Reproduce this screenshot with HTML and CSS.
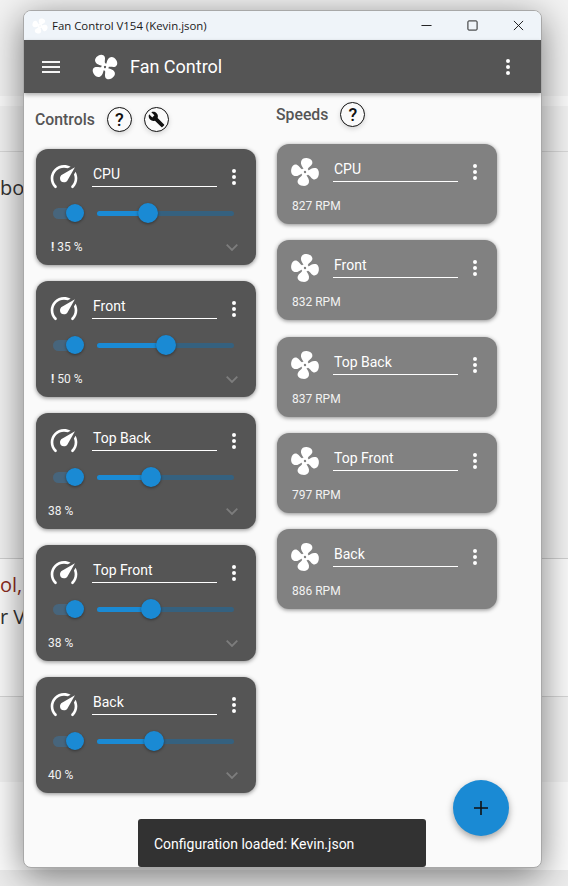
FILE: index.html
```html
<!DOCTYPE html>
<html lang="en">
<head>
  <meta charset="UTF-8">
  <meta name="viewport" content="width=device-width, initial-scale=1.0">
  <title>Fan Control</title>
  <link rel="stylesheet" href="styles.css">
</head>
<body>

<svg class="icon-defs" width="0" height="0">
  <symbol id="i-fan" viewBox="0 0 24 24">
    <path id="fan-blade" d="M10.6 9.8C9.2 8 7.8 6.8 8 4.6C8.2 2.5 10.2 1.4 12.6 1.5C15.2 1.6 16.9 3.2 16.5 5.2C16.1 7 14.2 7.8 13.5 10Z"/>
    <use href="#fan-blade" transform="rotate(90 12 12)"/>
    <use href="#fan-blade" transform="rotate(180 12 12)"/>
    <use href="#fan-blade" transform="rotate(270 12 12)"/>
    <path fill-rule="evenodd" d="M12 9.2a2.8 2.8 0 1 0 0 5.6a2.8 2.8 0 1 0 0-5.6ZM12 11.1a0.9 0.9 0 1 1 0 1.8a0.9 0.9 0 1 1 0-1.8Z"/>
  </symbol>
  <symbol id="i-gauge" viewBox="0 0 24 24"><path d="M12,16A3,3 0 0,1 9,13C9,11.88 9.61,10.9 10.5,10.39L20.21,4.77L14.68,14.35C14.18,15.33 13.17,16 12,16M12,3C13.81,3 15.5,3.5 16.97,4.32L14.87,5.53C14,5.19 13,5 12,5A8,8 0 0,0 4,13C4,15.21 4.89,17.21 6.34,18.65H6.35C6.74,19.04 6.74,19.67 6.35,20.06C5.96,20.45 5.32,20.45 4.93,20.07V20.07C3.12,18.26 2,15.76 2,13A10,10 0 0,1 12,3M22,13C22,15.76 20.88,18.26 19.07,20.07V20.07C18.68,20.45 18.05,20.45 17.66,20.06C17.27,19.67 17.27,19.04 17.66,18.65V18.65C19.11,17.2 20,15.21 20,13C20,12 19.81,11 19.46,10.1L20.67,8C21.5,9.5 22,11.18 22,13Z"/></symbol>
  <symbol id="i-wrench" viewBox="0 0 24 24"><path d="M22.7,19L13.6,9.9C14.5,7.6 14,4.9 12.1,3C10.1,1 7.1,0.6 4.7,1.7L9,6L6,9L1.6,4.7C0.4,7.1 0.9,10.1 2.9,12.1C4.8,14 7.5,14.5 9.8,13.6L18.9,22.7C19.3,23.1 19.9,23.1 20.3,22.7L22.6,20.4C23.1,20 23.1,19.3 22.7,19Z"/></symbol>
  <symbol id="i-dots" viewBox="0 0 24 24"><path d="M12,16A2,2 0 0,1 14,18A2,2 0 0,1 12,20A2,2 0 0,1 10,18A2,2 0 0,1 12,16M12,10A2,2 0 0,1 14,12A2,2 0 0,1 12,14A2,2 0 0,1 10,12A2,2 0 0,1 12,10M12,4A2,2 0 0,1 14,6A2,2 0 0,1 12,8A2,2 0 0,1 10,6A2,2 0 0,1 12,4Z"/></symbol>
</svg>

<!-- Page behind the window -->
<div class="backdrop">
  <div class="band band-a"></div>
  <div class="band band-b"></div>
  <div class="band band-c"></div>
  <div class="band band-d"><span class="back-text">bo</span></div>
  <div class="band band-e"><span class="back-text back-red">ol,</span><span class="back-text">r V</span></div>
  <div class="band band-f"></div>
  <div class="band band-g"></div>
  <div class="band band-h"></div>
</div>

<div class="window">
  <!-- Title bar -->
  <div class="titlebar">
    <svg class="title-icon"><use href="#i-fan"/></svg>
    <span class="title-text">Fan Control V154 (Kevin.json)</span>
    <div class="win-buttons">
      <svg class="win-btn" viewBox="0 0 12 12"><path d="M0.5 6H11.5"/></svg>
      <svg class="win-btn" viewBox="0 0 12 12"><rect x="1" y="1" width="10" height="10" rx="1"/></svg>
      <svg class="win-btn" viewBox="0 0 12 12"><path d="M1 1L11 11M11 1L1 11"/></svg>
    </div>
  </div>

  <!-- App bar -->
  <div class="appbar">
    <div class="burger"><span></span><span></span><span></span></div>
    <svg class="app-logo"><use href="#i-fan"/></svg>
    <span class="app-name">Fan Control</span>
    <svg class="app-menu"><use href="#i-dots"/></svg>
  </div>

  <div class="content">
    <!-- Controls -->
    <div class="column column-controls">
      <div class="section-head">
        <span class="section-title">Controls</span>
        <span class="round-btn">?</span>
        <span class="round-btn"><svg class="wrench"><use href="#i-wrench"/></svg></span>
      </div>

      <div class="card control-card">
        <div class="card-top">
          <svg class="card-icon"><use href="#i-gauge"/></svg>
          <span class="card-name">CPU</span>
          <svg class="card-menu"><use href="#i-dots"/></svg>
        </div>
        <div class="card-sliders">
          <div class="toggle"><span class="toggle-thumb"></span></div>
          <div class="slider"><div class="slider-fill" style="width: 51px"><span class="slider-thumb"></span></div></div>
        </div>
        <div class="card-bottom">
          <span class="card-value"><b>!</b> 35 %</span>
          <svg class="chevron" viewBox="0 0 12 7"><path d="M0.7 0.7L6 6L11.3 0.7"/></svg>
        </div>
      </div>

      <div class="card control-card">
        <div class="card-top">
          <svg class="card-icon"><use href="#i-gauge"/></svg>
          <span class="card-name">Front</span>
          <svg class="card-menu"><use href="#i-dots"/></svg>
        </div>
        <div class="card-sliders">
          <div class="toggle"><span class="toggle-thumb"></span></div>
          <div class="slider"><div class="slider-fill" style="width: 69px"><span class="slider-thumb"></span></div></div>
        </div>
        <div class="card-bottom">
          <span class="card-value"><b>!</b> 50 %</span>
          <svg class="chevron" viewBox="0 0 12 7"><path d="M0.7 0.7L6 6L11.3 0.7"/></svg>
        </div>
      </div>

      <div class="card control-card">
        <div class="card-top">
          <svg class="card-icon"><use href="#i-gauge"/></svg>
          <span class="card-name">Top Back</span>
          <svg class="card-menu"><use href="#i-dots"/></svg>
        </div>
        <div class="card-sliders">
          <div class="toggle"><span class="toggle-thumb"></span></div>
          <div class="slider"><div class="slider-fill" style="width: 54px"><span class="slider-thumb"></span></div></div>
        </div>
        <div class="card-bottom">
          <span class="card-value">38 %</span>
          <svg class="chevron" viewBox="0 0 12 7"><path d="M0.7 0.7L6 6L11.3 0.7"/></svg>
        </div>
      </div>

      <div class="card control-card">
        <div class="card-top">
          <svg class="card-icon"><use href="#i-gauge"/></svg>
          <span class="card-name">Top Front</span>
          <svg class="card-menu"><use href="#i-dots"/></svg>
        </div>
        <div class="card-sliders">
          <div class="toggle"><span class="toggle-thumb"></span></div>
          <div class="slider"><div class="slider-fill" style="width: 54px"><span class="slider-thumb"></span></div></div>
        </div>
        <div class="card-bottom">
          <span class="card-value">38 %</span>
          <svg class="chevron" viewBox="0 0 12 7"><path d="M0.7 0.7L6 6L11.3 0.7"/></svg>
        </div>
      </div>

      <div class="card control-card">
        <div class="card-top">
          <svg class="card-icon"><use href="#i-gauge"/></svg>
          <span class="card-name">Back</span>
          <svg class="card-menu"><use href="#i-dots"/></svg>
        </div>
        <div class="card-sliders">
          <div class="toggle"><span class="toggle-thumb"></span></div>
          <div class="slider"><div class="slider-fill" style="width: 57px"><span class="slider-thumb"></span></div></div>
        </div>
        <div class="card-bottom">
          <span class="card-value">40 %</span>
          <svg class="chevron" viewBox="0 0 12 7"><path d="M0.7 0.7L6 6L11.3 0.7"/></svg>
        </div>
      </div>
    </div>

    <!-- Speeds -->
    <div class="column column-speeds">
      <div class="section-head">
        <span class="section-title">Speeds</span>
        <span class="round-btn">?</span>
      </div>

      <div class="card speed-card">
        <div class="card-top">
          <svg class="card-icon"><use href="#i-fan"/></svg>
          <span class="card-name">CPU</span>
          <svg class="card-menu"><use href="#i-dots"/></svg>
        </div>
        <span class="card-value">827 RPM</span>
      </div>

      <div class="card speed-card">
        <div class="card-top">
          <svg class="card-icon"><use href="#i-fan"/></svg>
          <span class="card-name">Front</span>
          <svg class="card-menu"><use href="#i-dots"/></svg>
        </div>
        <span class="card-value">832 RPM</span>
      </div>

      <div class="card speed-card">
        <div class="card-top">
          <svg class="card-icon"><use href="#i-fan"/></svg>
          <span class="card-name">Top Back</span>
          <svg class="card-menu"><use href="#i-dots"/></svg>
        </div>
        <span class="card-value">837 RPM</span>
      </div>

      <div class="card speed-card">
        <div class="card-top">
          <svg class="card-icon"><use href="#i-fan"/></svg>
          <span class="card-name">Top Front</span>
          <svg class="card-menu"><use href="#i-dots"/></svg>
        </div>
        <span class="card-value">797 RPM</span>
      </div>

      <div class="card speed-card">
        <div class="card-top">
          <svg class="card-icon"><use href="#i-fan"/></svg>
          <span class="card-name">Back</span>
          <svg class="card-menu"><use href="#i-dots"/></svg>
        </div>
        <span class="card-value">886 RPM</span>
      </div>
    </div>
  </div>

  <!-- Floating bits -->
  <div class="fab">
    <svg viewBox="0 0 14 14"><path d="M7 0V14M0 7H14"/></svg>
  </div>
  <div class="snackbar">Configuration loaded: Kevin.json</div>
</div>

</body>
</html>
```

FILE: styles.css
```css
html,
body {
  margin: 0;
  height: 100%;
}

body {
  width: 568px;
  height: 886px;
  padding: 10px 0 0 23px;
  box-sizing: border-box;
  overflow: hidden;
  position: relative;
  font-family: Roboto, "Liberation Sans", sans-serif;
  background-color: #f4f4f4;
}

.icon-defs {
  position: absolute;
}

/* Page behind the window */
.backdrop {
  position: absolute;
  inset: 0;
  display: flex;
  flex-direction: column;
}

.band {
  box-sizing: border-box;
  background-color: #f3f3f3;
}

.band-a { height: 96px; }
.band-b { height: 10px; background-color: #fbfbfb; }
.band-c { height: 46px; border-bottom: 1px solid #d9d9d9; }

.band-d {
  height: 406px;
  padding-top: 20px;
}

.band-e {
  height: 139px;
  padding-top: 10px;
  background-color: #fbfbfb;
  border-top: 1px solid #d0d0d0;
  border-bottom: 1px solid #d6d6d6;
}

.band-f { height: 85px; }
.band-g { height: 88px; background-color: #fcfcfc; }
.band-h { height: 16px; background-color: #ececec; }

.back-text {
  display: block;
  font-family: "Open Sans", sans-serif;
  font-size: 20px;
  line-height: 32px;
  color: #333;
}

.back-red {
  color: #8c2b20;
}

/* Window */
.window {
  width: 519px;
  height: 858px;
  box-sizing: border-box;
  position: relative;
  display: flex;
  flex-direction: column;
  overflow: hidden;
  background-color: #fafafa;
  border: 1px solid #a8a8a8;
  border-radius: 8px;
  box-shadow: 0 8px 36px rgba(0, 0, 0, 0.5);
}

.titlebar {
  height: 29px;
  flex: none;
  display: flex;
  align-items: center;
  background-color: #eff4f9;
}

.title-icon {
  width: 18px;
  height: 18px;
  margin-left: 7px;
  flex: none;
  fill: #fff;
  transform: rotate(20deg);
}

.title-text {
  margin-left: 3px;
  font-family: "Open Sans", sans-serif;
  font-size: 11.4px;
  color: #1a1a1a;
}

.win-buttons {
  margin-left: auto;
  margin-right: 17px;
  display: flex;
  gap: 35px;
}

.win-btn {
  width: 11px;
  height: 11px;
  fill: none;
  stroke: #111;
  stroke-width: 1;
}

.appbar {
  height: 53px;
  flex: none;
  display: flex;
  align-items: center;
  background-color: #555;
  box-shadow: 0 2px 4px rgba(0, 0, 0, 0.3);
  position: relative;
  z-index: 1;
}

.burger {
  width: 18px;
  margin-left: 18px;
  display: flex;
  flex-direction: column;
  gap: 3px;
}

.burger span {
  height: 2px;
  background-color: #f4f4f4;
}

.app-logo {
  width: 30px;
  height: 30px;
  margin-left: 30px;
  fill: #fff;
  transform: rotate(-35deg);
}

.app-name {
  margin-left: 10px;
  font-size: 18px;
  color: #fff;
}

.app-menu {
  width: 24px;
  height: 24px;
  margin-left: auto;
  margin-right: 21px;
  fill: #fff;
}

/* Columns */
.content {
  flex: 1;
  display: flex;
}

.column {
  width: 220px;
  display: flex;
  flex-direction: column;
}

.column-controls {
  margin-left: 12px;
  padding-top: 13px;
  gap: 16px;
}

.column-speeds {
  margin-left: 21px;
  padding-top: 7.75px;
  gap: 16.25px;
}

.section-head {
  height: 27px;
  display: flex;
  align-items: center;
  gap: 12px;
}

.section-title {
  margin-left: -1px;
  font-size: 15.8px;
  font-weight: 500;
  color: #555;
}

.round-btn {
  width: 25px;
  height: 25px;
  box-sizing: border-box;
  display: flex;
  align-items: center;
  justify-content: center;
  border: 1.5px solid #111;
  border-radius: 50%;
  background-color: #fafafa;
  box-shadow: 0 2px 5px rgba(0, 0, 0, 0.15);
  font-size: 18px;
  font-weight: 500;
  color: #111;
}

.wrench {
  width: 17px;
  height: 17px;
  fill: #111;
}

/* Cards */
.card {
  box-sizing: border-box;
  border-radius: 12px;
  color: #fff;
  box-shadow: 0 1px 4px rgba(0, 0, 0, 0.45);
}

.control-card {
  height: 116px;
  padding: 12px 12px 0 12px;
  background-color: #555;
}

.speed-card {
  height: 80px;
  padding: 12px 12px 0 12px;
  background-color: #818181;
}

.speed-card .card-value {
  display: block;
  margin-top: 6px;
  margin-left: 3px;
}

.speed-card .card-icon {
  transform: rotate(8deg);
}

.card-top {
  height: 36px;
  display: flex;
  align-items: center;
}

.card-icon {
  width: 32px;
  height: 32px;
  flex: none;
  margin-top: -4px;
  fill: #fff;
}

.card-name {
  width: 125px;
  height: 23px;
  flex: none;
  box-sizing: border-box;
  margin-left: 12px;
  margin-top: -7px;
  padding-left: 1px;
  font-size: 14px;
  line-height: 20px;
  color: #fff;
  border-bottom: 1px solid #fff;
}

.card-menu {
  width: 24px;
  height: 24px;
  margin-left: 5px;
  margin-top: -4px;
  flex: none;
  fill: #fff;
}

.card-sliders {
  margin-top: 6px;
  height: 20px;
  display: flex;
  align-items: center;
}

.toggle {
  width: 28px;
  height: 11px;
  margin-left: 5px;
  flex: none;
  border-radius: 6px;
  background-color: #47657c;
  position: relative;
}

.toggle-thumb {
  position: absolute;
  right: -3px;
  top: -3.5px;
  width: 18px;
  height: 18px;
  border-radius: 50%;
  background-color: #1a8ad4;
  box-shadow: 0 1px 3px rgba(0, 0, 0, 0.4);
}

.slider {
  width: 137px;
  height: 5px;
  margin-left: 16px;
  flex: none;
  border-radius: 3px;
  background-color: #35617f;
}

.slider-fill {
  height: 5px;
  border-radius: 3px;
  background-color: #1a8ad4;
  position: relative;
}

.slider-thumb {
  position: absolute;
  right: -10px;
  top: -7.5px;
  width: 20px;
  height: 20px;
  border-radius: 50%;
  background-color: #1a8ad4;
  box-shadow: 0 1px 3px rgba(0, 0, 0, 0.4);
}

.card-bottom {
  margin-top: 16px;
  display: flex;
  align-items: center;
  justify-content: space-between;
  padding-right: 6px;
}

.card-value {
  font-size: 12px;
  line-height: 16px;
  color: #f2f2f2;
}

.card-value b {
  margin-left: 3px;
  font-weight: 700;
}

.chevron {
  width: 12px;
  height: 7px;
  fill: none;
  stroke: #7d7d7d;
  stroke-width: 1.8;
}

/* Floating bits */
.fab {
  position: absolute;
  left: 429px;
  top: 769px;
  width: 56px;
  height: 56px;
  display: flex;
  align-items: center;
  justify-content: center;
  border-radius: 50%;
  background-color: #1a8ad4;
  box-shadow: 0 3px 7px rgba(0, 0, 0, 0.35);
}

.fab svg {
  width: 14px;
  height: 14px;
  fill: none;
  stroke: #111;
  stroke-width: 1.6;
}

.snackbar {
  position: absolute;
  left: 114px;
  bottom: 0;
  width: 288px;
  height: 48px;
  box-sizing: border-box;
  padding: 2px 0 0 16px;
  display: flex;
  align-items: center;
  border-radius: 3px;
  background-color: #323232;
  font-size: 14px;
  color: #fff;
}
```
